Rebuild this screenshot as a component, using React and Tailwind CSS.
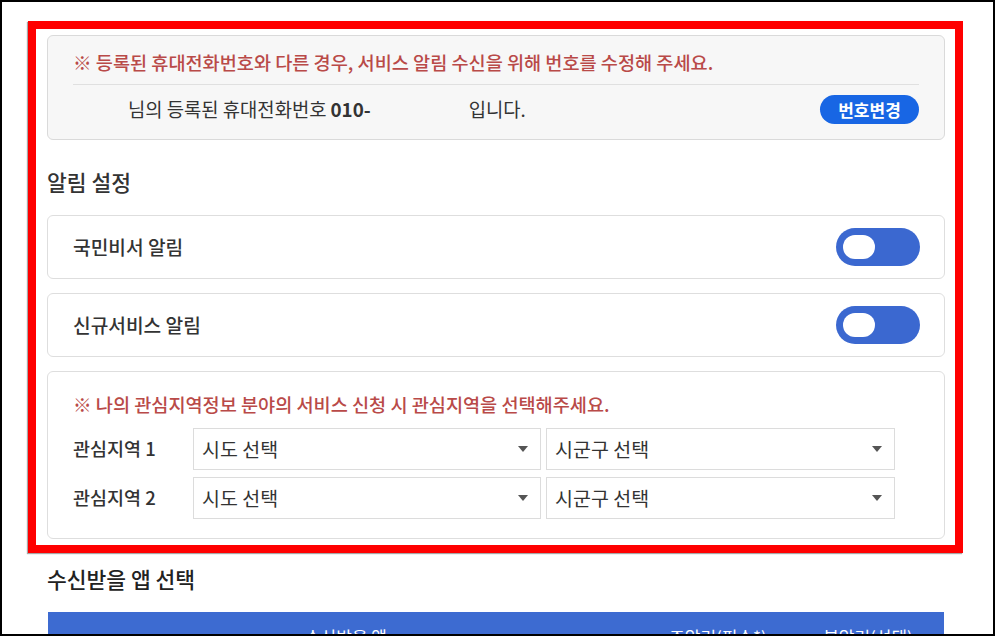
const FONT = { fontFamily: '"Noto Sans CJK KR", "Noto Sans", sans-serif' };

function Toggle() {
  return (
    <div className="w-[84px] h-[38px] rounded-full bg-[#3b68d0] flex items-center pl-[7px]">
      <div className="w-[32px] h-[24px] rounded-full bg-white"></div>
    </div>
  );
}

function Caret() {
  return (
    <svg width="10" height="6" viewBox="0 0 10 6" className="shrink-0">
      <path d="M0 0 L10 0 L5 6 Z" fill="#555" />
    </svg>
  );
}

function SelectBox({ label, className }) {
  return (
    <div
      className={`h-[42px] border border-[#dcdcdc] bg-white flex items-center justify-between pl-[8px] pr-[12px] text-[19.5px] text-[#333] ${className}`}
    >
      <span>{label}</span>
      <Caret />
    </div>
  );
}

function RegionRow({ title }) {
  return (
    <div className="flex items-center">
      <div className="w-[120px] text-[18.5px] font-medium text-[#333]">{title}</div>
      <SelectBox label="시도 선택" className="w-[348px]" />
      <SelectBox label="시군구 선택" className="w-[349px] ml-[5px]" />
    </div>
  );
}

export default function App() {
  return (
    <div className="w-[996px] h-[636px] bg-white overflow-hidden" style={FONT}>
      <div className="w-[995px] h-[636px] border-2 border-black pl-[26px] pt-[19px] overflow-hidden">
        <div className="w-[935px] border-[8px] border-[#ff0000] pl-[11px] pt-[6px] pb-[6px] shadow-[-1px_1px_1px_rgba(0,0,0,0.35)]">
          <div className="w-[898px] rounded-[6px] border border-[#dadada] bg-[#f7f7f7] px-[25px] pt-[12px] pb-[15px]">
            <div className="text-[18.6px] leading-[28px] font-medium text-[#b94a48] pb-[8px] border-b border-[#e0e0e0]">
              ※ 등록된 휴대전화번호와 다른 경우, 서비스 알림 수신을 위해 번호를 수정해 주세요.
            </div>
            <div className="flex items-center justify-between pt-[10px]">
              <div className="flex items-center text-[18.8px] text-[#333]">
                <span className="w-[55px]"></span>
                <span>님의 등록된 휴대전화번호 </span>
                <span className="font-bold ml-[4px]">010-</span>
                <span className="w-[98px]"></span>
                <span>입니다.</span>
              </div>
              <button
                type="button"
                className="w-[99px] h-[29px] rounded-full bg-[#1866e4] text-white text-[17px] font-bold leading-none"
              >
                번호변경
              </button>
            </div>
          </div>

          <h2 className="mt-[26px] mb-[17px] text-[21.5px] leading-[32px] font-medium text-[#333]">알림 설정</h2>

          <div className="w-[898px] flex flex-col gap-[14px]">
            <div className="h-[64px] rounded-[6px] border border-[#dedede] bg-white flex items-center justify-between pl-[25px] pr-[24px]">
              <span className="text-[19.2px] font-medium text-[#333]">국민비서 알림</span>
              <Toggle />
            </div>
            <div className="h-[64px] rounded-[6px] border border-[#dedede] bg-white flex items-center justify-between pl-[25px] pr-[24px]">
              <span className="text-[19.2px] font-medium text-[#333]">신규서비스 알림</span>
              <Toggle />
            </div>
            <div className="rounded-[6px] border border-[#dedede] bg-white pl-[25px] pt-[18px] pb-[19px]">
              <div className="text-[18.6px] leading-[28px] font-medium text-[#b94a48] mb-[10px]">
                ※ 나의 관심지역정보 분야의 서비스 신청 시 관심지역을 선택해주세요.
              </div>
              <div className="flex flex-col gap-[7px]">
                <RegionRow title="관심지역 1" />
                <RegionRow title="관심지역 2" />
              </div>
            </div>
          </div>
        </div>

        <h2 className="ml-[19px] mt-[10px] text-[21.5px] leading-[32px] font-medium text-[#222]">수신받을 앱 선택</h2>

        <div className="ml-[20px] mt-[17px] w-[896px] h-[60px] bg-[#3d6bd1] flex text-white text-[17px] pt-[12px]">
          <div className="w-[596px] text-center">수신받을 앱</div>
          <div className="w-[148px] text-center">주알림(필수*)</div>
          <div className="w-[152px] text-center">부알림(선택)</div>
        </div>
      </div>
    </div>
  );
}
